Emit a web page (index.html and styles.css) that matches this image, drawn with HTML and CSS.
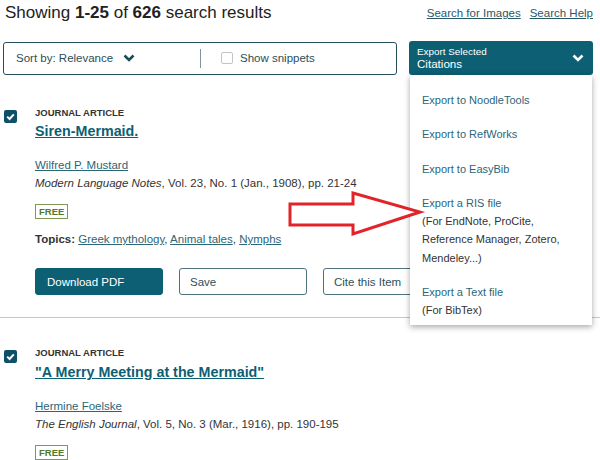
FILE: index.html
```html
<!DOCTYPE html>
<html>
<head>
<meta charset="utf-8">
<link rel="stylesheet" href="styles.css">
</head>
<body>
<div class="page">
  <header class="top">
    <h1 class="count">Showing <b>1-25</b> of <b>626</b> search results</h1>
    <nav class="help"><a href="#">Search for Images</a><a href="#">Search Help</a></nav>
  </header>

  <div class="toolbar">
    <div class="sortbox">
      <span class="sort">Sort by: Relevance
        <svg class="chev" width="12" height="10" viewBox="0 0 12 10"><path d="M1.5 2.5 L6 7 L10.5 2.5" fill="none" stroke="#1e4a58" stroke-width="2.6"/></svg>
      </span>
      <span class="divider"></span>
      <label class="snip"><span class="box"></span>Show snippets</label>
    </div>
    <div class="export">
      <button class="export-btn">
        <span class="lbl"><span class="small">Export Selected</span><span class="big">Citations</span></span>
        <svg class="chev-w" width="12" height="10" viewBox="0 0 12 10"><path d="M1.5 2.5 L6 7 L10.5 2.5" fill="none" stroke="#fff" stroke-width="2.6"/></svg>
      </button>
      <ul class="menu">
        <li><a href="#">Export to NoodleTools</a></li>
        <li><a href="#">Export to RefWorks</a></li>
        <li><a href="#">Export to EasyBib</a></li>
        <li><a href="#">Export a RIS file</a><span class="note">(For EndNote, ProCite, Reference Manager, Zotero, Mendeley...)</span></li>
        <li><a href="#">Export a Text file</a><span class="note">(For BibTex)</span></li>
      </ul>
    </div>
  </div>

  <article class="result r1">
    <span class="check"><svg width="13" height="13" viewBox="0 0 13 13"><path d="M3.2 6.6 L5.6 9 L9.8 4.4" fill="none" stroke="#fff" stroke-width="2"/></svg></span>
    <div class="body">
      <div class="type">JOURNAL ARTICLE</div>
      <div class="title"><a href="#">Siren-Mermaid.</a></div>
      <div class="author"><a href="#">Wilfred P. Mustard</a></div>
      <div class="journal"><i>Modern Language Notes</i>, Vol. 23, No. 1 (Jan., 1908), pp. 21-24</div>
      <div class="badge"><span class="free">FREE</span></div>
      <div class="topics"><b>Topics:</b> <a href="#">Greek mythology</a>, <a href="#">Animal tales</a>, <a href="#">Nymphs</a></div>
      <div class="actions">
        <button class="btn primary">Download PDF</button>
        <button class="btn">Save</button>
        <button class="btn">Cite this Item</button>
      </div>
    </div>
  </article>

  <hr class="sep">

  <article class="result r2">
    <span class="check"><svg width="13" height="13" viewBox="0 0 13 13"><path d="M3.2 6.6 L5.6 9 L9.8 4.4" fill="none" stroke="#fff" stroke-width="2"/></svg></span>
    <div class="body">
      <div class="type">JOURNAL ARTICLE</div>
      <div class="title"><a href="#">"A Merry Meeting at the Mermaid"</a></div>
      <div class="author"><a href="#">Hermine Foelske</a></div>
      <div class="journal"><i>The English Journal</i>, Vol. 5, No. 3 (Mar., 1916), pp. 190-195</div>
      <div class="badge"><span class="free">FREE</span></div>
    </div>
  </article>

  <svg class="arrow" width="140" height="50" viewBox="0 0 140 50">
    <polygon points="4,15 67,15 67,4 134,23 67,45 67,36 4,36" fill="#fff" stroke="#e1242a" stroke-width="3" stroke-linejoin="miter" stroke-miterlimit="10"/>
  </svg>
</div>
</body>
</html>
```

FILE: styles.css
```css
* { box-sizing: border-box; margin: 0; padding: 0; }
body {
  margin: 0;
  font-family: "Liberation Sans", Arial, sans-serif;
  color: #333;
  background: #fff;
  width: 600px;
  height: 460px;
  overflow: hidden;
}
.page { position: relative; height: 460px; overflow: hidden; }

.top {
  display: flex;
  justify-content: space-between;
  align-items: center;
  height: 26px;
  padding: 0 7px 0 5px;
}
.count { font-size: 17px; font-weight: normal; color: #222; line-height: 26px; }
.count b { font-weight: bold; }
.help { display: flex; gap: 9px; font-size: 11.5px; }
.help a { color: #2a5869; text-decoration: underline; }

.toolbar {
  display: flex;
  align-items: center;
  gap: 12px;
  margin-top: 15px;
  padding: 0 7px 0 3px;
  height: 34px;
}
.sortbox {
  flex: 0 0 394px;
  height: 33px;
  border: 1px solid #24505e;
  border-radius: 3px;
  display: flex;
  align-items: center;
  font-size: 11.5px;
  color: #2b4e5a;
}
.sort {
  width: 196px;
  padding-left: 12px;
  display: flex;
  align-items: center;
  gap: 10px;
}
.divider { width: 1px; height: 19px; background: #7f969e; }
.snip { display: flex; align-items: center; gap: 7px; margin-left: 20px; }
.box { width: 12px; height: 12px; border: 1px solid #c4c4c4; border-radius: 2px; }

.export { flex: 0 0 184px; height: 34px; position: relative; }
.export-btn {
  width: 100%;
  height: 34px;
  background: #0d5f74;
  color: #fff;
  border: 0;
  border-radius: 3px;
  display: flex;
  align-items: center;
  justify-content: space-between;
  padding: 0 9px 0 8px;
  font-family: inherit;
  text-align: left;
}
.lbl { display: flex; flex-direction: column; }
.small { font-size: 9.9px; line-height: 12px; }
.big { font-size: 11.6px; line-height: 12px; }

.menu {
  position: absolute;
  top: 34px;
  left: 1px;
  right: 1px;
  height: 250px;
  background: #fff;
  box-shadow: 0 2px 6px rgba(0, 0, 0, 0.35);
  list-style: none;
  padding: 16px 12px 6px 12px;
  font-size: 11px;
  line-height: 18.3px;
  z-index: 2;
}
.menu li { margin-bottom: 16px; }
.menu li:last-child { margin-bottom: 0; }
.menu a { color: #2b6678; text-decoration: none; display: block; }
.note { color: #333; display: block; }

.result { display: grid; grid-template-columns: 35px 1fr; }
.r1 { margin-top: 31px; }
.r2 { margin-top: 28px; }
.check {
  margin: 4px 0 0 4px;
  width: 13px;
  height: 13px;
  background: #0d5067;
  border-radius: 2px;
  display: flex;
}
.type { font-size: 9.5px; font-weight: bold; line-height: 14px; color: #333; }
.title { font-size: 14.3px; font-weight: bold; line-height: 20px; margin-top: 1px; }
.r2 .title { margin-top: 2px; }
.title a { color: #0d5f74; text-decoration: underline; }
.author { margin-top: 15px; font-size: 11.5px; line-height: 18px; }
.author a, .topics a { color: #2b6678; text-decoration: underline; }
.journal { font-size: 11.5px; line-height: 18px; }
.badge { margin-top: 9px; height: 15px; }
.free {
  display: inline-block;
  border: 1px solid #7f9a58;
  color: #4f7a2c;
  font-size: 9.5px;
  font-weight: bold;
  line-height: 13px;
  padding: 0 3px;
}
.topics { margin-top: 14px; font-size: 11.5px; line-height: 18px; }
.topics b { color: #333; }
.actions { margin-top: 20px; display: flex; gap: 16px; }
.btn {
  width: 128px;
  height: 27px;
  border: 1px solid #4d7280;
  border-radius: 3px;
  background: #fff;
  color: #2f4f5a;
  font-family: inherit;
  font-size: 11.5px;
  text-align: left;
  padding-left: 10px;
}
.btn.primary { background: #0d5f74; border-color: #0d5f74; color: #fff; padding-left: 11px; }

.sep { border: 0; border-top: 1px solid #c8c8c8; margin-top: 22px; }

.arrow { position: absolute; left: 286px; top: 189px; z-index: 3; }
```
